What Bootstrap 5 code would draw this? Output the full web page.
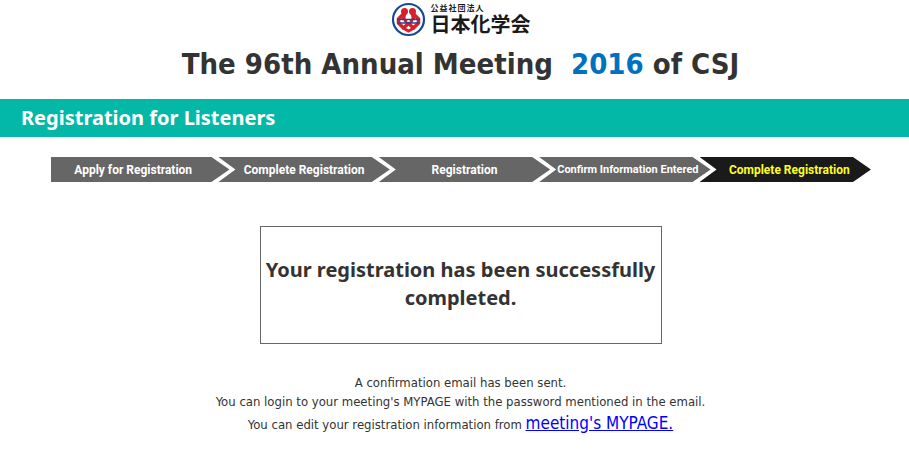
<!DOCTYPE html>
<html lang="en">
<head>
<meta charset="utf-8">
<meta name="viewport" content="width=device-width, initial-scale=1">
<title>The 96th Annual Meeting 2016 of CSJ</title>
<link href="https://cdn.jsdelivr.net/npm/bootstrap@5.3.0/dist/css/bootstrap.min.css" rel="stylesheet">
<style>
body { font-family: "DejaVu Sans Condensed", "Noto Sans", "Noto Sans CJK JP", sans-serif; font-size: 13px; line-height: 19px; color: #333; background: #fff; }
.brand-link { color: #1a1a1a; height: 38px; gap: 5px; padding-left: 12px; }
.brand-name { font-family: "Noto Sans CJK JP", sans-serif; font-weight: 700; font-size: 20px; line-height: 22px; }
.brand-kind { font-family: "Noto Sans CJK JP", sans-serif; font-weight: 700; font-size: 8px; line-height: 10px; letter-spacing: 1px; }
.meeting-title { font-size: 29px; line-height: 52px; font-weight: 700; padding-left: 12px; }
.meeting-year { color: #0070c0; }
.section-bar { background: #04b8a8; color: #fff; margin-top: 9px; padding: 0 21px; }
.section-bar h2 { font-family: "Noto Sans", sans-serif; font-size: 20px; line-height: 38px; font-weight: 700; }
.steps { padding: 0 38px 0 51px; margin: 20px 0 44px; }
.steps li { flex: 171 1 0; min-width: 0; height: 25px; margin-left: -11px; background: #666; color: #fff; font: 700 12px/26px Roboto, "Liberation Sans", sans-serif; text-align: center; white-space: nowrap; clip-path: polygon(0 0, calc(100% - 18px) 0, 100% 50%, calc(100% - 18px) 100%, 0 100%, 17px 50%); }
.steps li:first-child { flex-grow: 178; margin-left: 0; clip-path: polygon(0 0, calc(100% - 18px) 0, 100% 50%, calc(100% - 18px) 100%, 0 100%); }
.steps li:first-child span { padding-right: 14px; }
.steps .step-long { font-size: 11px; }
.steps .step-long span { padding-left: 6px; }
.steps .step-now { background: #1a1a1a; color: #ff2; }
.steps .step-now span { padding-left: 8px; }
.notice { max-width: 402px; min-height: 118px; border: 1px solid #666; padding: 29px 0; }
.notice p { font-family: "Noto Sans", sans-serif; font-size: 20px; line-height: 28px; font-weight: 700; }
.details { margin-top: 29px; padding-left: 12px; }
.details a { color: #00f; font-size: 17px; line-height: 25px; }
</style>
<script src="https://cdn.jsdelivr.net/npm/bootstrap@5.3.0/dist/js/bootstrap.bundle.min.js"></script>
</head>
<body>
<header class="text-center">
  <div class="brand-link d-flex justify-content-center align-items-center" lang="ja">
    <svg width="35" height="35" viewBox="0 0 35 35" aria-hidden="true">
      <circle cx="17.500" cy="17.500" r="15.500" fill="#fff" stroke="#164a96" stroke-width="2.200"/>
      <g fill="#d8202c"><circle cx="13.500" cy="9.500" r="3.500"/><circle cx="21.500" cy="9.500" r="3.500"/></g>
      <g fill="none" stroke="#d8202c" stroke-width="3.600" stroke-linejoin="round"><path d="M13.500 11 7.500 17v4l5 5 10-9-1-6"/><path d="M21.500 11l6 6v4l-5 5-10-9 1-6"/></g>
      <path d="M12 26l5.500 3L23 26" fill="none" stroke="#d8202c" stroke-width="3"/>
      <path d="M6 17.500h23M7 21h21" stroke="#164a96" stroke-width="1.300"/>
      <path d="M10 19.200h3M16 19.200h3M22 19.200h3" stroke="#fff" stroke-width="1.200"/>
    </svg>
    <div class="text-start">
      <div class="brand-kind">公益社団法人</div>
      <div class="brand-name">日本化学会</div>
    </div>
  </div>
  <h1 class="meeting-title mb-0">The 96th Annual Meeting&nbsp; <span class="meeting-year">2016</span> of CSJ</h1>
</header>
<div class="section-bar"><h2 class="mb-0">Registration for Listeners</h2></div>
<main>
  <ol class="steps d-flex list-unstyled">
    <li><span>Apply for Registration</span></li>
    <li><span>Complete Registration</span></li>
    <li><span>Registration</span></li>
    <li class="step-long"><span>Confirm Information Entered</span></li>
    <li class="step-now" aria-current="step"><span>Complete Registration</span></li>
  </ol>
  <div class="ps-2 ms-1">
    <div class="notice mx-auto text-center"><p class="mb-0">Your registration has been successfully completed.</p></div>
  </div>
  <div class="details text-center">
    <p class="mb-0">A confirmation email has been sent.</p>
    <p class="mb-0">You can login to your meeting's MYPAGE with the password mentioned in the email.</p>
    <p class="mb-0">You can edit your registration information from <a href="#mypage">meeting's MYPAGE.</a></p>
  </div>
</main>
</body>
</html>
